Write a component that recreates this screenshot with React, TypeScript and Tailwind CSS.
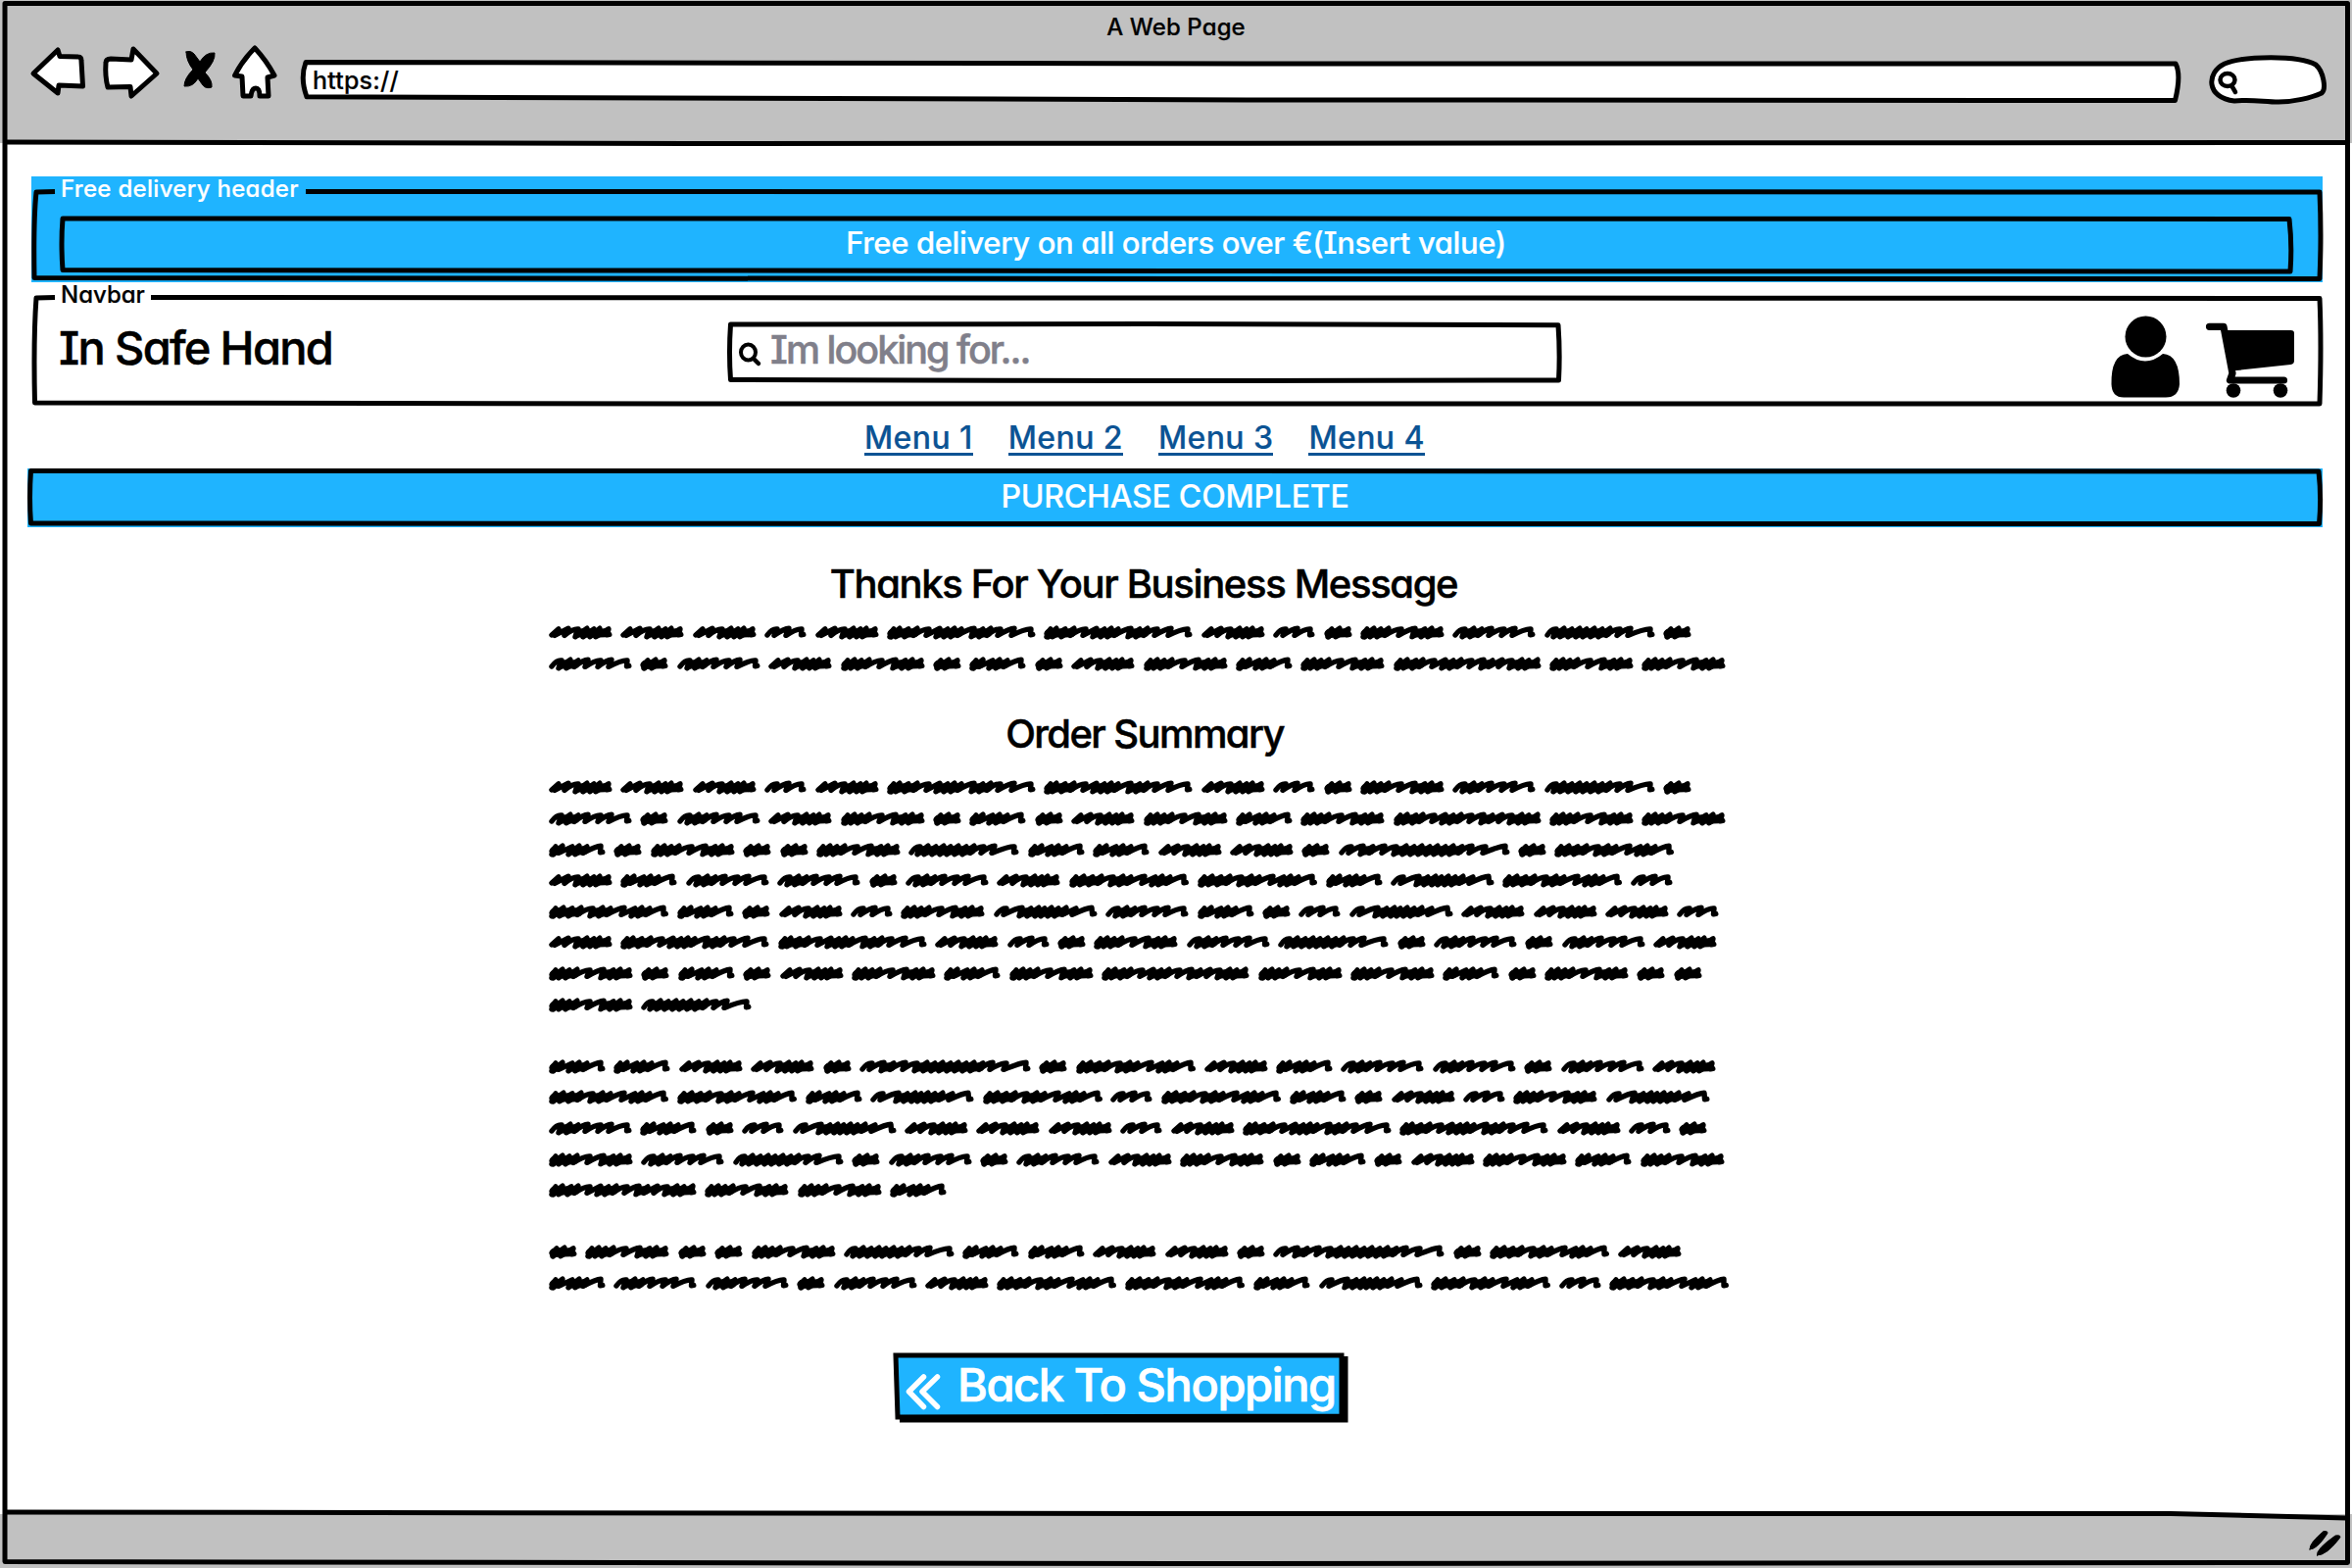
import type { ReactNode } from "react";

type Word = { w: number; peaks: number[]; slope?: boolean };

const WORDS: Record<string, Word> = {
  A: { w: 65, peaks: [10, 20, 31, 39, 46, 52, 61], slope: true },
  B: { w: 43, peaks: [14, 26, 39], slope: true },
  C: { w: 29, peaks: [8, 16, 25] },
  D: { w: 152, peaks: [7, 13, 22, 31, 44, 54, 62, 69, 76, 90, 98, 106, 117, 131, 148] },
  E: { w: 85, peaks: [14, 22, 30, 41, 54, 65, 81], slope: true },
  F: { w: 86, peaks: [7, 14, 21, 29, 43, 57, 66, 73, 82] },
  G: { w: 58, peaks: [7, 14, 24, 31, 39, 54] },
  H: { w: 113, peaks: [13, 20, 28, 36, 43, 51, 59, 67, 78, 89, 109], slope: true },
  I: { w: 122.5, peaks: [7, 15, 24, 33, 46, 55, 63, 78, 88, 95, 103, 118] },
  J: { w: 106, peaks: [14, 30, 38, 46, 52, 59, 66, 74, 84, 101], slope: true },
  K: { w: 175, peaks: [14, 26, 35, 48, 60, 69, 77, 85, 93, 101, 109, 117, 126, 137, 151, 171], slope: true },
  L: { w: 151, peaks: [7, 14, 23, 30, 43, 53, 61, 69, 81, 93, 101, 111, 122, 131, 138, 147] },
};

const MESSAGE = ["AAABADDABCFEHC", "ECEAFCGCAFGFLFF"];
const SUMMARY = [
  "AAABADDABCFEHC",
  "ECEAFCGCAFGFLFF",
  "GCFCCFHGGAACKCI",
  "AGEECEAIIGJIB",
  "IGCABFJEGCBJAAAB",
  "ADDABCFEHCECEA",
  "FCGCAFGFLFFGCFCC",
  "FH",
  "",
  "GGAACKCIAGEECEA",
  "IIGJIBIGCABFJ",
  "EGCBJAAABADDABC",
  "FEHCECEAFCGCAFGF",
  "LFFG",
  "",
  "CFCCFHGGAACKCIA",
  "GEECEAIIGJIBI",
];

// Builds the zigzag pen stroke of one scribbled word.
function scribble({ w, peaks, slope }: Word) {
  let d = slope ? "M3 10" : "M4.5 12L3.3 8.5";
  peaks.forEach((p, i) => {
    const prev = i ? p - peaks[i - 1] : 0;
    const last = i === peaks.length - 1;
    const next = last ? 20 : peaks[i + 1] - p;
    const top = i % 2 ? 3.2 : 3.9;
    if (prev > 10.5 || (i === 0 && p > 12)) d += `Q${p - 6} 3.2 ${p - 1} ${top}`;
    else d += `L${p} ${top}`;
    if (last) d += `L${w - 5.5} 9.8L${w - 3.2} 9.4`;
    else d += `L${p - 4} ${next < 9.5 ? 11.8 : 10.4}`;
  });
  return d;
}

// Heavier pass over the runs where the pen strokes sit close together.
function fill({ peaks, slope }: Word) {
  let d = slope ? "" : `M5 8.6H${peaks[0]}`;
  peaks.forEach((p, i) => {
    if (i && p - peaks[i - 1] < 9.5 && !(i === 1 && slope && peaks[0] < 12)) d += `M${peaks[i - 1] - 1} 8L${p - 3} 7.8`;
  });
  return d;
}

function Scribbles({ rows }: { rows: string[] }) {
  return (
    <div className="flex w-[1214px] flex-col">
      {rows.map((row, r) => (
        <div key={r} className="flex h-[31.6px] items-center gap-[8.4px]">
          {row.split("").map((c, i) => (
            <svg
              key={i}
              width={WORDS[c].w}
              height="16"
              viewBox={`0 0 ${WORDS[c].w} 16`}
              className="shrink-0 overflow-visible"
              fill="none"
              stroke="black"
              strokeLinecap="round"
              strokeLinejoin="round"
            >
              <path d={scribble(WORDS[c])} strokeWidth="5.4" />
              <path d={fill(WORDS[c])} strokeWidth="9" />
            </svg>
          ))}
        </div>
      ))}
    </div>
  );
}

// Overlay for hand-drawn outlines; box is "x y width height" in page units.
function Sketch({ box, children }: { box: string; children: ReactNode }) {
  return (
    <svg
      viewBox={box}
      className="pointer-events-none absolute inset-0 h-full w-full overflow-visible"
      fill="none"
      stroke="black"
      strokeWidth="5"
      strokeLinecap="round"
      strokeLinejoin="round"
    >
      {children}
    </svg>
  );
}

export default function App() {
  return (
    <div className="relative flex h-[1600px] w-[2400px] flex-col overflow-hidden bg-white font-['Inter',sans-serif] font-medium text-black [-webkit-text-stroke:0.2px] [font-feature-settings:'cv11','cv08']">
      <header className="relative flex h-[146px] flex-col bg-[#c1c1c1]">
        <div className="flex h-[56px] items-center justify-center text-[24px] tracking-[0.1px]">A Web Page</div>
        <div className="flex h-[52px] items-center pl-[319px] pt-px text-[25px] tracking-[0.2px]">
          <span className="relative z-10">https://</span>
        </div>
        <Sketch box="0 0 2400 146">
          <path fill="white" d="M34 75L59 51L61 57.5L80 58Q83 58 83 62L84.500 88L60 87L59 95Z" />
          <path fill="white" d="M108 64Q108 60 113 60L134 61L136 50L160 75L134 98L133 88.500L110 89Q107 78 108 64Z" />
          <path fill="black" strokeWidth="1" d="M190 53Q194 51 198 55L204 63Q210 53 219 54Q220 62 209 74Q217 82 216 89Q210 91 207 87L202 80Q197 89 188 88Q188 80 197 71Q190 62 190 53Z" />
          <path fill="white" d="M260 49Q272 62 280 77L273 79L274 98L265 98Q265 90 261 90Q257 90 256 98L248 98L247 78L239.500 77Q247 62 260 49Z" />
          <path fill="white" d="M312 63.500L1300 65L2220 65Q2226 76 2219.500 102.500L1300 102L313 98.800Q306 80 312 63.500Z" />
          <path fill="white" d="M2280 103C2251 100 2251 74 2270 65C2290 57 2345 56 2363 66C2371 73 2374 91 2369 95C2358 100 2340 104 2325 104C2310 104 2298 101 2280 103Z" />
          <ellipse cx="2273" cy="81.500" rx="7.500" ry="6.500" strokeWidth="4.500" />
          <path strokeWidth="4.500" d="M2277.500 88L2281 94" />
          <path strokeLinecap="butt" d="M4 145L700 146.500L2394 145.500" />
        </Sketch>
      </header>

      <main className="flex flex-1 flex-col">
        <section className="relative ml-[32px] mt-[34px] flex h-[108px] w-[2338px] flex-col bg-[#1fb4ff] text-white">
          <div className="flex h-[24px] items-center pl-[30px] pt-px text-[24px] tracking-[0.3px]">Free delivery header</div>
          <div className="flex h-[88px] items-center justify-center pr-[2px] pt-[4px] text-[31px] tracking-[-0.36px]">
            Free delivery on all orders over €(Insert value)
          </div>
          <Sketch box="32 180 2338 108">
            <path strokeLinecap="butt" d="M56 195.500L37 196Q34 225 35 283.500L1200 284.500L2367 284.500Q2369 240 2367 196L312 195.500" />
            <path d="M64 223L1200 223L2336 223.500Q2339 250 2337 277L1200 276.500L64 275.500Q62 248 64 223Z" />
          </Sketch>
        </section>

        <nav className="relative ml-[32px] flex h-[128px] w-[2338px] flex-col">
          <div className="flex h-[24px] items-center pl-[30px] pt-px text-[24px]">Navbar</div>
          <div className="flex h-[84px] items-center pl-[28px] [-webkit-text-stroke:0.5px]">
            <div className="w-[726px] text-[47px] leading-none tracking-[-1.7px]">In Safe Hand</div>
            <div className="mt-[8px] text-[39.500px] leading-none tracking-[-2px] text-[#807f8a]">Im looking for...</div>
          </div>
          <Sketch box="32 288 2338 128">
            <path strokeLinecap="butt" d="M56 303.500L37 304Q34 345 35.500 411L700 412L2367 412Q2369 350 2367 304.500L154 303.500" />
            <path d="M745.500 331L1170 330.500L1590 331.700Q1592 360 1590.500 388L1170 388.500L745.500 387.500Q743.500 360 745.500 331Z" />
            <ellipse cx="763.500" cy="359.500" rx="7.500" ry="8" strokeWidth="4" />
            <path strokeWidth="4.500" d="M769 366L774 371" />
            <g fill="black" stroke="none">
              <path d="M2171 361Q2189 376 2207 361Q2224 362 2224 392Q2223 405.500 2210 405.500H2167Q2155 405.500 2154.500 392Q2154 362 2171 361Z" />
              <ellipse cx="2189.500" cy="343.500" rx="23" ry="24" fill="white" />
              <ellipse cx="2189.500" cy="343.500" rx="21" ry="21" />
              <path d="M2269.500 337H2337.500Q2341 337 2341 340V368Q2341 371.500 2337.500 372L2282.500 378H2276.500Z" />
              <circle cx="2279" cy="398.500" r="7.300" />
              <circle cx="2327" cy="398.500" r="7.300" />
            </g>
            <path strokeWidth="7.200" d="M2254.500 333.300H2269L2278 381L2275.500 388H2330.500" />
          </Sketch>
        </nav>

        <div className="flex h-[62px] items-start gap-[36px] pl-[882px] pt-[15px] text-[32px] leading-[31px] tracking-[0.4px] text-[#0b5394]">
          {["Menu 1", "Menu 2", "Menu 3", "Menu 4"].map((t) => (
            <a key={t} className="border-b-[3px] border-current">{t}</a>
          ))}
        </div>

        <div className="relative ml-[28px] flex h-[60px] w-[2342px] items-center justify-center bg-[#1fb4ff] pb-[3px] text-[32px] tracking-[-0.2px] text-white">
          PURCHASE COMPLETE
          <Sketch box="28 478 2342 60">
            <path d="M31.500 480.500L1200 480.500L2366 481Q2369 508 2366.500 534.500L1200 534.500L31.500 534Q29.500 508 31.500 480.500Z" />
          </Sketch>
        </div>

        <div className="ml-[560px] flex w-[1214px] flex-col items-center [-webkit-text-stroke:0.5px]">
          <h1 className="mt-[28px] flex h-[60px] items-center text-[40px] tracking-[-1.36px]">Thanks For Your Business Message</h1>
          <div className="mt-[4.500px]">
            <Scribbles rows={MESSAGE} />
          </div>
          <h2 className="mt-[25.500px] flex h-[60px] items-center pl-[2px] text-[40px] tracking-[-1.6px]">Order Summary</h2>
          <div className="mt-[9.500px]">
            <Scribbles rows={SUMMARY} />
          </div>
        </div>

        <button className="relative ml-[911px] mt-[54px] flex h-[72px] w-[465px] items-center whitespace-nowrap pb-[6px] pl-[66px] text-[47px] leading-none tracking-[-1.4px] text-white [-webkit-text-stroke:0.7px]">
          <Sketch box="911 1381 465 72">
            <path fill="black" stroke="none" d="M918 1385H1375.500V1452.500H918Z" />
            <path fill="#1fb4ff" strokeLinejoin="miter" d="M914 1384L1369 1384L1369 1446L916 1447Z" />
            <path stroke="white" strokeWidth="5.500" d="M942.500 1406L927.500 1421L942.500 1436.500M956.500 1406L941 1421L956.500 1436.500" />
          </Sketch>
          <span className="relative">Back To Shopping</span>
        </button>
      </main>

      <footer className="h-[55px] bg-[#c1c1c1]" />
      <Sketch box="0 0 2400 1600">
        <path strokeLinecap="butt" d="M5 1543L1200 1544.500L2215 1544.500L2395 1549" />
        <path d="M5 3.500L2395.500 3.500L2395.500 1594.500L1200 1595.500L5 1593.500Z" />
        <path fill="black" strokeWidth="1" d="M2357 1581Q2356 1575 2371 1562.500Q2377 1562 2374 1566Q2364 1581 2357 1581ZM2364.500 1587Q2363 1581 2383 1567Q2390 1566 2387 1570Q2374 1587 2364.500 1587Z" />
      </Sketch>
    </div>
  );
}
